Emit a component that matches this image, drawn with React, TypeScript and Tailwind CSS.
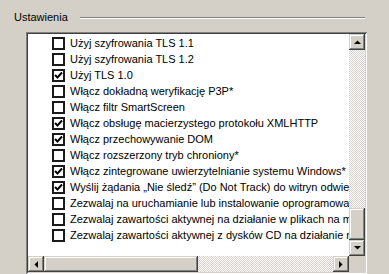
import React from "react";

const items: [string, boolean][] = [
  ["Użyj szyfrowania TLS 1.1", false],
  ["Użyj szyfrowania TLS 1.2", false],
  ["Użyj TLS 1.0", true],
  ["Włącz dokładną weryfikację P3P*", false],
  ["Włącz filtr SmartScreen", false],
  ["Włącz obsługę macierzystego protokołu XMLHTTP", true],
  ["Włącz przechowywanie DOM", true],
  ["Włącz rozszerzony tryb chroniony*", false],
  ["Włącz zintegrowane uwierzytelnianie systemu Windows*", true],
  ["Wyślij żądania „Nie śledź” (Do Not Track) do witryn odwiedzanych w programie Internet Explorer", true],
  ["Zezwalaj na uruchamianie lub instalowanie oprogramowania, nawet jeśli podpis jest nieprawidłowy", false],
  ["Zezwalaj zawartości aktywnej na działanie w plikach na moim komputerze*", false],
  ["Zezwalaj zawartości aktywnej z dysków CD na działanie na moim komputerze*", false],
];

const raised =
  "bg-[#d4d0c8] shadow-[inset_-1px_-1px_#404040,inset_1px_1px_#d4d0c8,inset_-2px_-2px_#808080,inset_2px_2px_#fff]";
const track =
  "bg-[repeating-conic-gradient(#d4d0c8_0_25%,#ffffff_0_50%)] bg-[length:2px_2px]";

function Arrow({ dir }: { dir: "up" | "down" | "left" | "right" }) {
  const pts: Record<string, string> = {
    up: "0,4 7,4 3.5,0.5",
    down: "0,0 7,0 3.5,3.5",
    left: "4,0 4,7 0.5,3.5",
    right: "0,0 0,7 3.5,3.5",
  };
  const vertical = dir === "up" || dir === "down";
  return (
    <svg width={vertical ? 7 : 4} height={vertical ? 4 : 7} viewBox={vertical ? "0 0 7 4" : "0 0 4 7"}>
      <polygon points={pts[dir]} fill="#000" />
    </svg>
  );
}

function Check({ on }: { on: boolean }) {
  return (
    <div className="w-[13px] h-[13px] border-2 border-[#1a1a1a] bg-white flex items-center justify-center shrink-0 mt-[2px]">
      {on && (
        <svg width="9" height="9" viewBox="0 0 9 9">
          <polyline points="1,4 3.5,6.5 8,1.5" fill="none" stroke="#000" strokeWidth="2" />
        </svg>
      )}
    </div>
  );
}

export default function App() {
  return (
    <div
      className="w-[389px] h-[274px] bg-[#d4d0c8] overflow-hidden text-[11px] text-black"
      style={{ fontFamily: '"Liberation Sans", Arial, sans-serif' }}
    >
      <div className="flex items-center h-[32px] pt-[2px] pr-[24px]">
        <span className="ml-[14px] leading-[14px]">Ustawienia</span>
        <div className="ml-[12px] flex-1 h-[2px] border-t border-[#808080] border-b border-b-white mt-[2px]" />
      </div>
      <div className="ml-[26px] w-[341px] h-[242px] p-[2px] shadow-[inset_1px_1px_#808080,inset_-1px_-1px_#fff,inset_2px_2px_#404040,inset_-2px_-2px_#d4d0c8]">
        <div className="grid grid-cols-[321px_16px] grid-rows-[222px_16px] w-[337px] h-[238px]">
          <div className="bg-white overflow-hidden pt-[1px]">
            {items.map(([t, on], i) => (
              <div key={i} className="flex h-[16px] pl-[24px] whitespace-nowrap">
                <Check on={on} />
                <span className="ml-[5px] leading-[16px]">{t}</span>
              </div>
            ))}
          </div>
          <div className="flex flex-col">
            <div className={`${raised} h-[16px] flex items-center justify-center`}>
              <Arrow dir="up" />
            </div>
            <div className={`${track} flex-1`} />
            <div className={`${raised} h-[32px]`} />
            <div className={`${raised} h-[16px] flex items-center justify-center`}>
              <Arrow dir="down" />
            </div>
          </div>
          <div className="flex">
            <div className={`${raised} w-[16px] flex items-center justify-center`}>
              <Arrow dir="left" />
            </div>
            <div className={`${raised} w-[154px]`} />
            <div className={`${track} flex-1`} />
            <div className={`${raised} w-[16px] flex items-center justify-center`}>
              <Arrow dir="right" />
            </div>
          </div>
          <div className="bg-[#d4d0c8]" />
        </div>
      </div>
    </div>
  );
}
